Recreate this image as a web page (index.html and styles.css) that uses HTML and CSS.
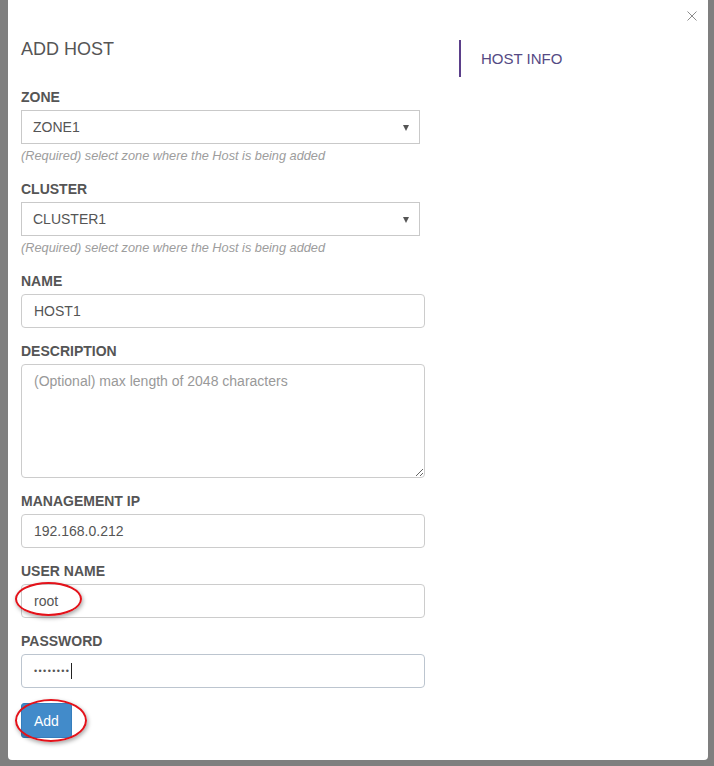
FILE: index.html
```html
<!DOCTYPE html>
<html lang="en">
<head>
<meta charset="utf-8">
<title>Add Host</title>
<link rel="stylesheet" href="styles.css">
</head>
<body>
<div class="modal">
  <button class="close" type="button" aria-label="Close">
    <svg width="10" height="10" viewBox="0 0 10 10"><path d="M0.5 0.5L9.5 9.5M9.5 0.5L0.5 9.5" stroke="#8c8c8c" stroke-width="1" fill="none"/></svg>
  </button>
  <div class="layout">
    <form class="form">
      <h1 class="title">ADD HOST</h1>

      <div class="group">
        <label class="label">ZONE</label>
        <div class="select-wrap">
          <select class="select"><option>ZONE1</option></select>
          <span class="caret"></span>
        </div>
        <p class="help">(Required) select zone where the Host is being added</p>
      </div>

      <div class="group">
        <label class="label">CLUSTER</label>
        <div class="select-wrap">
          <select class="select"><option>CLUSTER1</option></select>
          <span class="caret"></span>
        </div>
        <p class="help">(Required) select zone where the Host is being added</p>
      </div>

      <div class="group">
        <label class="label">NAME</label>
        <input class="input" type="text" value="HOST1">
      </div>

      <div class="group">
        <label class="label">DESCRIPTION</label>
        <textarea class="textarea" placeholder="(Optional) max length of 2048 characters"></textarea>
      </div>

      <div class="group">
        <label class="label">MANAGEMENT IP</label>
        <input class="input" type="text" value="192.168.0.212">
      </div>

      <div class="group">
        <label class="label">USER NAME</label>
        <input class="input" type="text" value="root">
      </div>

      <div class="group">
        <label class="label">PASSWORD</label>
        <div class="input input-focus"><span class="dots">••••••••</span><span class="cursor"></span></div>
      </div>

      <button class="btn" type="button">Add</button>
    </form>

    <nav class="side">
      <div class="side-item">HOST INFO</div>
    </nav>
  </div>

  <span class="mark mark-root"></span>
  <span class="mark mark-add"></span>
</div>
</body>
</html>
```

FILE: styles.css
```css
* { box-sizing: border-box; }

html, body {
  margin: 0;
  padding: 0;
}

body {
  background: #7f7f7f;
  font-family: "Liberation Sans", Arial, sans-serif;
  color: #555;
  height: 766px;
  overflow: hidden;
}

.modal {
  position: relative;
  margin-left: 8px;
  width: 700px;
  height: 760px;
  background: #fff;
  border-radius: 0 0 4px 4px;
  padding: 39px 13px 0 13px;
}

.close {
  position: absolute;
  top: 11px;
  right: 11px;
  border: 0;
  background: none;
  padding: 0;
  width: 10px;
  height: 10px;
  display: flex;
}

.layout {
  display: grid;
  grid-template-columns: 404px 1fr;
  column-gap: 34px;
  align-items: start;
}

.form {
  display: flex;
  flex-direction: column;
  align-items: flex-start;
}

.title {
  margin: 0 0 28px 0;
  font-size: 18px;
  line-height: 20px;
  font-weight: normal;
  color: #555;
}

.group {
  width: 100%;
  margin-bottom: 13px;
}

.label {
  display: block;
  font-size: 14px;
  line-height: 20px;
  font-weight: bold;
  color: #555;
  margin-bottom: 3px;
}

.select-wrap {
  position: relative;
  width: 399px;
}

.select {
  -webkit-appearance: none;
  appearance: none;
  display: block;
  width: 100%;
  height: 34px;
  border: 1px solid #c9c9c9;
  border-radius: 0;
  background: #fff;
  padding: 0 11px;
  font-family: inherit;
  font-size: 14px;
  color: #555;
  outline: none;
}

.caret {
  position: absolute;
  right: 11px;
  top: 15px;
  width: 0;
  height: 0;
  border-left: 3.5px solid transparent;
  border-right: 3.5px solid transparent;
  border-top: 6px solid #555;
  pointer-events: none;
}

.help {
  margin: 3px 0 2px 0;
  font-size: 12.75px;
  line-height: 17px;
  font-style: italic;
  color: #9d9d9d;
}

.input {
  display: flex;
  align-items: center;
  width: 100%;
  height: 34px;
  border: 1px solid #ccc;
  border-radius: 4px;
  background: #fff;
  padding: 0 12px;
  font-family: inherit;
  font-size: 14px;
  color: #555;
  outline: none;
}

.input-focus {
  border-color: #bcc5cf;
}

.dots {
  font-size: 9px;
  letter-spacing: 1.4px;
  color: #555;
  line-height: 1;
}

.cursor {
  display: inline-block;
  width: 1px;
  height: 16px;
  background: #222;
  margin-left: 1px;
}

.textarea {
  display: block;
  width: 100%;
  height: 114px;
  border: 1px solid #ccc;
  border-radius: 4px;
  padding: 6px 12px;
  font-family: inherit;
  font-size: 14px;
  line-height: 20px;
  color: #555;
  outline: none;
  resize: both;
}

.textarea::placeholder {
  color: #999;
}

.btn {
  margin-top: 2px;
  height: 35px;
  padding: 0 12px;
  border: 1px solid #357ebd;
  border-radius: 3px;
  background: #428bca;
  color: #fff;
  font-family: inherit;
  font-size: 14px;
}

.side {
  margin-top: 1px;
}

.side-item {
  border-left: 2px solid #5b3f8a;
  height: 37px;
  padding-left: 20px;
  display: flex;
  align-items: center;
  font-size: 15px;
  color: #554a84;
}

.mark {
  position: absolute;
  border: 2px solid #e3121a;
  border-radius: 50%;
  box-shadow: 1px 2px 4px rgba(0, 0, 0, 0.35);
  pointer-events: none;
}

.mark-root {
  left: 7px;
  top: 582px;
  width: 67px;
  height: 34px;
}

.mark-add {
  left: 7px;
  top: 699px;
  width: 72px;
  height: 43px;
}
```
